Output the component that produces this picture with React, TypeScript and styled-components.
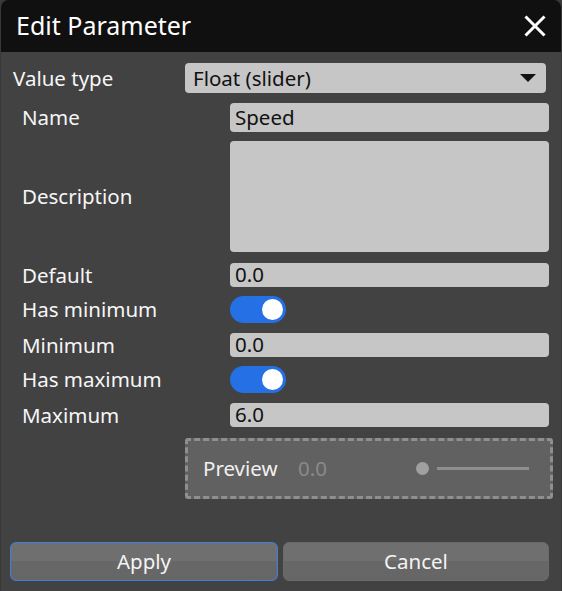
import React from "react";
import styled, { createGlobalStyle } from "styled-components";

const Global = createGlobalStyle`
  html, body { margin: 0; padding: 0; background: #3a3a3a; }
  body { font-family: "Noto Sans", "Open Sans", sans-serif; }
  * { box-sizing: border-box; }
`;

const Window = styled.div`
  width: 562px;
  height: 591px;
  background: #424242;
  border-radius: 8px 8px 0 0;
  overflow: hidden;
  display: flex;
  flex-direction: column;
  border-left: 1px solid #393939;
  border-right: 1px solid #393939;
`;

const TitleBar = styled.div`
  height: 52px;
  background: #101010;
  display: flex;
  align-items: center;
  justify-content: space-between;
  padding: 0 15px 0 15px;
  flex-shrink: 0;
`;

const Title = styled.div`
  color: #ffffff;
  font-size: 25px;
  line-height: 1;
  margin-top: -2px;
`;

const CloseButton = styled.div`
  width: 22px;
  height: 22px;
  display: flex;
  margin-top: -1px;
`;

const Body = styled.div`
  display: flex;
  flex-direction: column;
  padding: 11px 0 0 0;
  flex: 1;
`;

const TypeRow = styled.div`
  display: grid;
  grid-template-columns: 172px 361px;
  align-items: center;
  padding-left: 12px;
  height: 30px;
`;

const Label = styled.div`
  color: #f6f6f6;
  font-size: 20.5px;
  line-height: 1;
  margin-top: 0px;
`;

const Select = styled.div`
  height: 30px;
  background: #c6c6c6;
  border-radius: 4px;
  display: flex;
  align-items: center;
  justify-content: space-between;
  padding: 0 10px 0 8px;
  color: #111;
  font-size: 20.5px;
`;

const SelectText = styled.span`
  margin-top: -1px;
`;

const Caret = styled.div`
  width: 0;
  height: 0;
  border-left: 8px solid transparent;
  border-right: 8px solid transparent;
  border-top: 8px solid #111;
`;

const Fields = styled.div`
  display: flex;
  flex-direction: column;
  padding-left: 21px;
`;

const FieldRow = styled.div<{ $gap: number }>`
  display: grid;
  grid-template-columns: 208px 319px;
  align-items: center;
  margin-top: ${(p) => p.$gap}px;
`;

const Input = styled.div<{ $h: number }>`
  height: ${(p) => p.$h}px;
  background: #c6c6c6;
  border-radius: 4px;
  padding: 0 5px;
  color: #111;
  font-size: 20.5px;
  display: flex;
  align-items: center;
  line-height: 1;
`;

const InputText = styled.span`
  margin-top: -1px;
`;

const Toggle = styled.div`
  width: 56px;
  height: 27px;
  border-radius: 14px;
  background: #2670e6;
  display: flex;
  align-items: center;
  justify-content: flex-end;
  padding-right: 3px;
`;

const Knob = styled.div`
  width: 21px;
  height: 21px;
  border-radius: 50%;
  background: #ffffff;
`;

const Preview = styled.div`
  margin: 11px 0 0 184px;
  width: 368px;
  height: 61px;
  background: #616161;
  border: 3px dashed #8f8f8f;
  border-radius: 3px;
  display: flex;
  align-items: center;
  padding-left: 15px;
`;

const PreviewLabel = styled.span`
  color: #f0f0f0;
  font-size: 20.5px;
  width: 95px;
  margin-top: -1px;
`;

const PreviewValue = styled.span`
  color: #8a8a8a;
  font-size: 20.5px;
  width: 118px;
  margin-top: -1px;
`;

const Slider = styled.div`
  display: flex;
  align-items: center;
  gap: 8px;
`;

const Dot = styled.div`
  width: 13px;
  height: 13px;
  border-radius: 50%;
  background: #a0a0a0;
`;

const Track = styled.div`
  width: 92px;
  height: 3px;
  background: #8e8e8e;
`;

const Footer = styled.div`
  margin-top: auto;
  display: grid;
  grid-template-columns: 268px 266px;
  gap: 5px;
  padding: 0 0 10px 9px;
`;

const Button = styled.div<{ $focused?: boolean }>`
  height: 39px;
  border-radius: 6px;
  background: linear-gradient(#6f6f6f, #6f6f6f 50%, #676767 50%, #666666);
  border: 1px solid ${(p) => (p.$focused ? "#3f7fe0" : "#6a6a6a")};
  color: #f4f4f4;
  font-size: 20.5px;
  display: flex;
  align-items: center;
  justify-content: center;
`;

const ButtonText = styled.span`
  margin-top: -1px;
`;

export default function App() {
  return (
    <>
      <Global />
      <Window>
        <TitleBar>
          <Title>Edit Parameter</Title>
          <CloseButton>
            <svg width="22" height="22" viewBox="0 0 22 22">
              <path d="M1.5 1.5 L20.5 20.5 M20.5 1.5 L1.5 20.5" stroke="#fff" strokeWidth="3" strokeLinecap="butt" />
            </svg>
          </CloseButton>
        </TitleBar>
        <Body>
          <TypeRow>
            <Label>Value type</Label>
            <Select>
              <SelectText>Float (slider)</SelectText>
              <Caret />
            </Select>
          </TypeRow>
          <Fields>
            <FieldRow $gap={10}>
              <Label>Name</Label>
              <Input $h={29}><InputText>Speed</InputText></Input>
            </FieldRow>
            <FieldRow $gap={9}>
              <Label>Description</Label>
              <Input $h={111} />
            </FieldRow>
            <FieldRow $gap={11}>
              <Label>Default</Label>
              <Input $h={24}><InputText>0.0</InputText></Input>
            </FieldRow>
            <FieldRow $gap={9}>
              <Label>Has minimum</Label>
              <Toggle><Knob /></Toggle>
            </FieldRow>
            <FieldRow $gap={10}>
              <Label>Minimum</Label>
              <Input $h={24}><InputText>0.0</InputText></Input>
            </FieldRow>
            <FieldRow $gap={9}>
              <Label>Has maximum</Label>
              <Toggle><Knob /></Toggle>
            </FieldRow>
            <FieldRow $gap={10}>
              <Label>Maximum</Label>
              <Input $h={24}><InputText>6.0</InputText></Input>
            </FieldRow>
          </Fields>
          <Preview>
            <PreviewLabel>Preview</PreviewLabel>
            <PreviewValue>0.0</PreviewValue>
            <Slider>
              <Dot />
              <Track />
            </Slider>
          </Preview>
          <Footer>
            <Button $focused><ButtonText>Apply</ButtonText></Button>
            <Button><ButtonText>Cancel</ButtonText></Button>
          </Footer>
        </Body>
      </Window>
    </>
  );
}
